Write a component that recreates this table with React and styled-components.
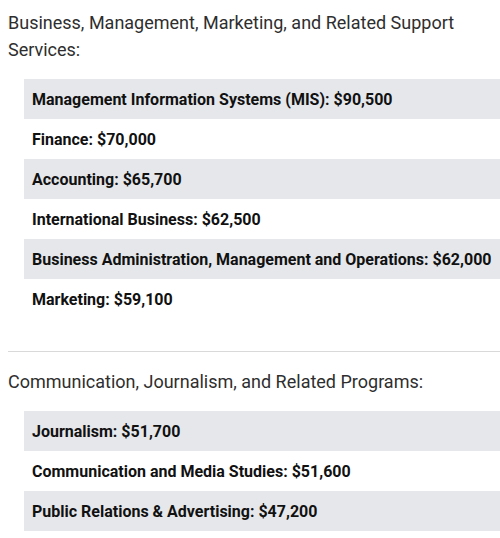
import React from 'react'
import styled, { createGlobalStyle } from 'styled-components'

const GlobalStyle = createGlobalStyle`
  body {
    margin: 0;
    padding: 9px 0 8px 8px;
    background: #fff;
    font-family: Roboto, "Liberation Sans", sans-serif;
  }
`

const Page = styled.div`
  display: flex;
  flex-direction: column;
`

const Section = styled.section`
  display: flex;
  flex-direction: column;
  padding-bottom: ${({ last }) => (last ? '0' : '32px')};
  border-bottom: ${({ last }) => (last ? 'none' : '1px solid #d9d9d9')};
  margin-bottom: ${({ last }) => (last ? '0' : '16px')};
`

const Heading = styled.p`
  margin: 0 0 16px;
  font-size: 18px;
  line-height: 27px;
  color: #2e2e2e;
`

const List = styled.ul`
  list-style: none;
  margin: 0 0 0 16px;
  padding: 0;
`

const Row = styled.li`
  height: 40px;
  display: flex;
  align-items: center;
  padding: 0 8px;
  background: ${({ shaded }) => (shaded ? '#e5e7eb' : 'transparent')};
  font-size: 16px;
  font-weight: 700;
  color: #111;
  white-space: nowrap;
`

const sections = [
  {
    title: 'Business, Management, Marketing, and Related Support Services:',
    items: [
      'Management Information Systems (MIS): $90,500',
      'Finance: $70,000',
      'Accounting: $65,700',
      'International Business: $62,500',
      'Business Administration, Management and Operations: $62,000',
      'Marketing: $59,100'
    ]
  },
  {
    title: 'Communication, Journalism, and Related Programs:',
    items: [
      'Journalism: $51,700',
      'Communication and Media Studies: $51,600',
      'Public Relations & Advertising: $47,200'
    ]
  }
]

export default function App () {
  return (
    <Page>
      <GlobalStyle />
      {sections.map((section, i) => (
        <Section key={section.title} last={i === sections.length - 1}>
          <Heading>{section.title}</Heading>
          <List>
            {section.items.map((item, idx) => (
              <Row key={item} shaded={idx % 2 === 0}>{item}</Row>
            ))}
          </List>
        </Section>
      ))}
    </Page>
  )
}
